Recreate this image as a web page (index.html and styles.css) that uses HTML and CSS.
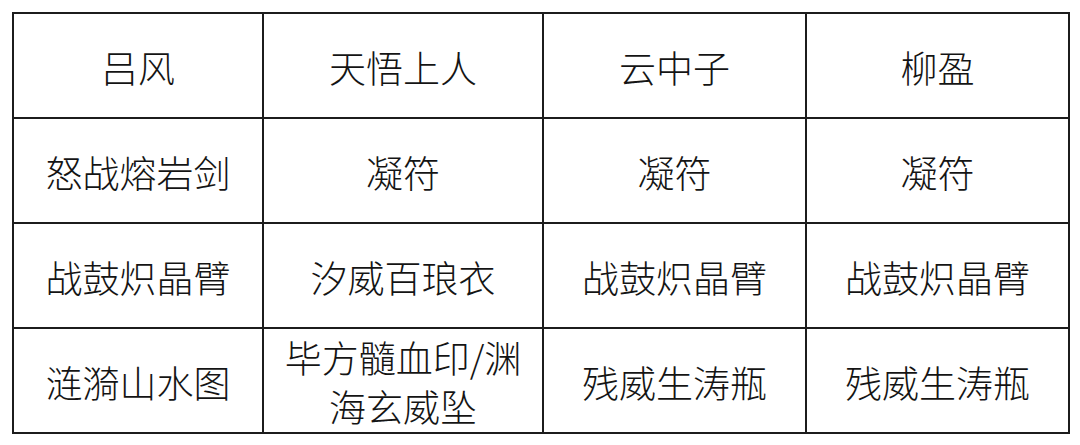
FILE: index.html
```html
<!DOCTYPE html>
<html lang="zh-CN">
<head>
<meta charset="utf-8">
<title>表格</title>
<link rel="stylesheet" href="styles.css">
</head>
<body>
<div class="page">
  <table class="grid">
    <colgroup>
      <col class="c1">
      <col class="c2">
      <col class="c3">
      <col class="c4">
    </colgroup>
    <tbody>
      <tr>
        <td>吕风</td>
        <td>天悟上人</td>
        <td>云中子</td>
        <td>柳盈</td>
      </tr>
      <tr>
        <td>怒战熔岩剑</td>
        <td>凝符</td>
        <td>凝符</td>
        <td>凝符</td>
      </tr>
      <tr>
        <td>战鼓炽晶臂</td>
        <td>汐威百琅衣</td>
        <td>战鼓炽晶臂</td>
        <td>战鼓炽晶臂</td>
      </tr>
      <tr>
        <td>涟漪山水图</td>
        <td class="two">毕方髓血印/渊<br>海玄威坠</td>
        <td>残威生涛瓶</td>
        <td>残威生涛瓶</td>
      </tr>
    </tbody>
  </table>
</div>
</body>
</html>
```

FILE: styles.css
```css
html, body {
  margin: 0;
  padding: 0;
  background: #ffffff;
}

.page {
  padding: 12px 0 0 12px;
}

.grid {
  border-collapse: collapse;
  table-layout: fixed;
  width: 1056px;
  font-family: "Noto Sans CJK SC", "Noto Sans CJK JP", sans-serif;
  font-weight: 300;
  font-size: 37px;
  color: #141414;
}

.c1 { width: 250px; }
.c2 { width: 280px; }
.c3 { width: 263px; }
.c4 { width: 263px; }

.grid td {
  border: 2px solid #1c1c1c;
  height: 99px;
  padding: 4px 4px 0;
  text-align: center;
  vertical-align: middle;
  line-height: 1.3;
  white-space: nowrap;
}

.grid td.two {
  padding: 2px 4px 0;
  line-height: 49px;
}
```
